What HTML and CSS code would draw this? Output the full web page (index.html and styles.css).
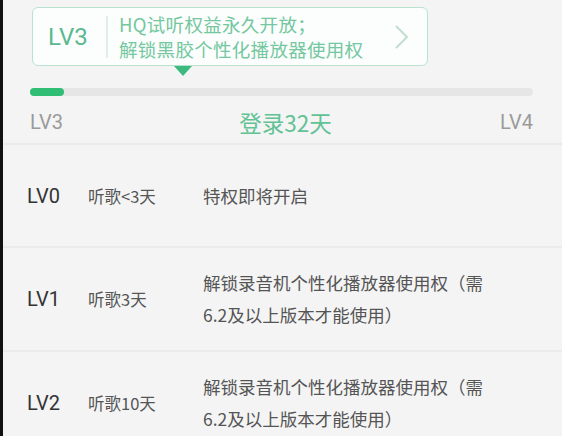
FILE: index.html
```html
<!DOCTYPE html>
<html lang="zh">
<head>
<meta charset="utf-8">
<link rel="stylesheet" href="styles.css">
</head>
<body>
<div class="page">
  <section class="top">
    <div class="card-wrap">
      <div class="card">
        <div class="card-lv">LV3</div>
        <div class="card-sep"></div>
        <div class="card-text">
          <div>HQ试听权益永久开放；</div>
          <div>解锁黑胶个性化播放器使用权</div>
        </div>
        <svg class="chev" width="15" height="26" viewBox="0 0 15 26"><path d="M2 2 L13 13 L2 24" fill="none" stroke="#c3ddd0" stroke-width="2"/></svg>
      </div>
      <div class="pointer"></div>
    </div>
    <div class="track"><div class="fill" style="width:34px"></div></div>
    <div class="labels">
      <span class="lvl">LV3</span>
      <span class="days">登录32天</span>
      <span class="lvl">LV4</span>
    </div>
  </section>
  <ul class="list">
    <li class="row">
      <span class="lv">LV0</span>
      <span class="cond">听歌&lt;3天</span>
      <span class="desc">特权即将开启</span>
    </li>
    <li class="row">
      <span class="lv">LV1</span>
      <span class="cond">听歌3天</span>
      <span class="desc">解锁录音机个性化播放器使用权（需6.2及以上版本才能使用）</span>
    </li>
    <li class="row">
      <span class="lv">LV2</span>
      <span class="cond">听歌10天</span>
      <span class="desc">解锁录音机个性化播放器使用权（需6.2及以上版本才能使用）</span>
    </li>
  </ul>
</div>
</body>
</html>
```
FILE: styles.css
```css
html, body {
  margin: 0;
  padding: 0;
  background: #f4f4f4;
}
body {
  font-family: "Noto Sans CJK SC", "Noto Sans", sans-serif;
  width: 562px;
  height: 436px;
  overflow: hidden;
}
.page {
  border-left: 3px solid #111;
  height: 436px;
  box-sizing: border-box;
}
.top {
  padding: 7px 29px 0 27px;
  border-bottom: 2px solid #ebebeb;
  height: 145px;
  box-sizing: border-box;
}
.card-wrap {
  position: relative;
  width: 396px;
  margin-left: 2px;
}
.card {
  display: flex;
  align-items: center;
  height: 59px;
  box-sizing: border-box;
  border: 1px solid #b9e3cf;
  border-radius: 6px;
  background: #fbfefc;
  padding: 0 18px 0 15px;
}
.card-lv {
  font-family: "Roboto", sans-serif;
  font-size: 24px;
  color: #5cb890;
  width: 43px;
}
.card-sep {
  width: 2px;
  height: 42px;
  background: #dfeee6;
  margin: 0 11px 0 15px;
}
.card-text {
  flex: 1;
  font-size: 18.5px;
  line-height: 25px;
  color: #74c7a0;
  letter-spacing: 0.3px;
}
.chev {
  display: block;
}
.pointer {
  position: absolute;
  left: 142px;
  top: 59px;
  width: 0;
  height: 0;
  border-left: 9px solid transparent;
  border-right: 9px solid transparent;
  border-top: 10px solid #3dba7d;
}
.track {
  margin-top: 22px;
  height: 8px;
  border-radius: 4px;
  background: #e6e6e6;
}
.fill {
  height: 100%;
  border-radius: 4px;
  background: #2fbe74;
}
.labels {
  display: flex;
  justify-content: space-between;
  align-items: center;
  margin-top: 11px;
  font-size: 20px;
  line-height: 30px;
}
.lvl {
  font-family: "Roboto", sans-serif;
  color: #9a9a9a;
}
.days {
  color: #62c294;
  font-size: 22.5px;
  margin-left: 8px;
}
.list {
  list-style: none;
  margin: 0;
  padding: 0;
}
.row {
  display: flex;
  align-items: center;
  height: 103px;
  border-bottom: 2px solid #ebebeb;
  padding-left: 24px;
  box-sizing: border-box;
}
.row + .row {
  height: 104px;
}
.lv {
  font-family: "Roboto", sans-serif;
  font-size: 20px;
  color: #333;
  width: 61px;
}
.cond {
  font-size: 16.5px;
  color: #555;
  width: 115px;
}
.desc {
  font-size: 17.5px;
  line-height: 32px;
  color: #555;
  width: 292px;
}
```
